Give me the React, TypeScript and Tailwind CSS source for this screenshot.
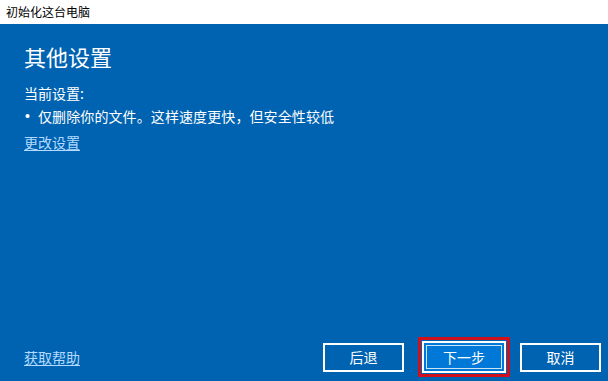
import React from "react";

const font = { fontFamily: '"Microsoft YaHei", "Noto Sans CJK SC", "Noto Sans", sans-serif' };

export default function App() {
  return (
    <div className="flex h-[381px] w-[608px] flex-col overflow-hidden" style={font}>
      <div className="flex h-6 items-center bg-white px-[6px] text-[12px] text-black">
        初始化这台电脑
      </div>

      <div className="flex flex-1 flex-col bg-[#0063b1] pl-6 pr-[7px] text-white">
        <h1 className="mt-[17px] text-[22px] leading-[30px] font-normal">其他设置</h1>

        <div className="mt-[11px] text-[14px] leading-[23px]">
          <p>当前设置:</p>
          <p className="flex">
            <span className="w-[14px] pl-[1px] font-['Liberation_Sans',sans-serif]">•</span>
            <span className="tracking-[0.1px]">仅删除你的文件。这样速度更快，但安全性较低</span>
          </p>
          <a href="#" className="mt-[3px] inline-block text-[#b3dbff] underline underline-offset-2">
            更改设置
          </a>
        </div>

        <div className="mt-auto mb-[4px] flex items-center justify-between">
          <a href="#" className="text-[14px] text-[#b3dbff] underline underline-offset-2">
            获取帮助
          </a>
          <div className="flex items-center">
            <button className="h-[29px] w-[81px] border-2 border-white bg-[#0063b1] text-[14px] text-white">
              后退
            </button>
            <div className="ml-[14px] border-[3px] border-[#d0101b] p-[1px]">
              <button className="flex h-[32px] w-[84px] items-center justify-center border-2 border-white bg-[#0078d7] p-[2px] text-[14px] text-white">
                <span className="flex h-full w-full items-center justify-center border border-white/80">下一步</span>
              </button>
            </div>
            <button className="ml-[10px] h-[29px] w-[81px] border-2 border-white bg-[#0063b1] text-[14px] text-white">
              取消
            </button>
          </div>
        </div>
      </div>
    </div>
  );
}
